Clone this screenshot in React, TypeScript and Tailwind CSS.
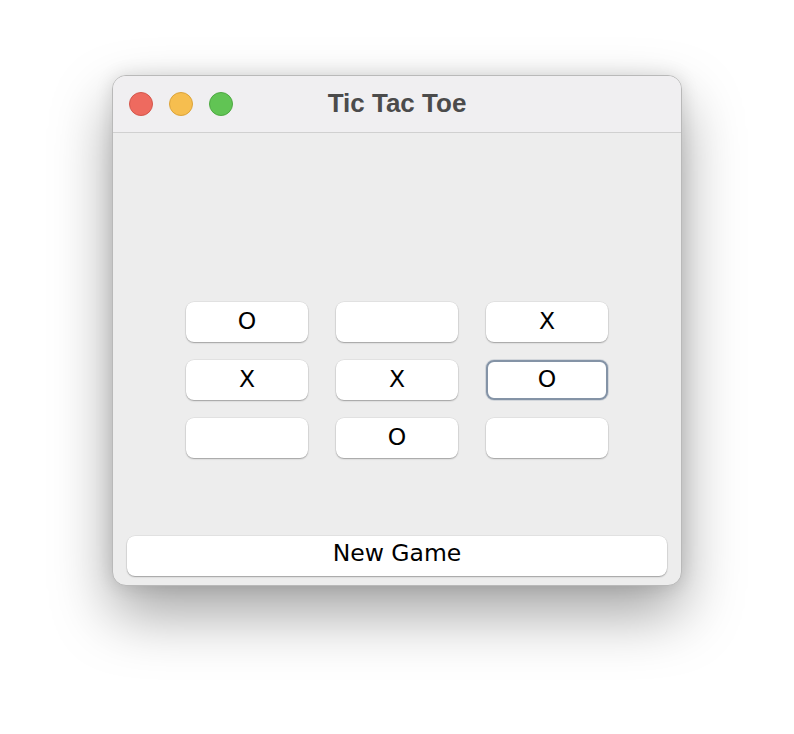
import React from "react";

const cells = ["O", "", "X", "X", "X", "O", "", "O", ""];

export default function App() {
  return (
    <div className="w-[794px] h-[734px] bg-white pt-[75px] pl-[112px]">
      <div className="w-[570px] h-[511px] rounded-[14px] bg-[#ededed] border border-[#b9b9b9] shadow-[0_28px_60px_rgba(0,0,0,0.36),0_0_18px_rgba(0,0,0,0.12)] flex flex-col overflow-hidden">
        <div className="h-[57px] shrink-0 bg-[#f0eff1] border-b border-[#d0d0d0] flex items-center relative">
          <div className="flex items-center gap-[16px] pl-[16px]">
            <div className="w-[24px] h-[24px] rounded-full bg-[#ee6a5f] border border-[#d4574c]" />
            <div className="w-[24px] h-[24px] rounded-full bg-[#f6be4f] border border-[#dca43a]" />
            <div className="w-[24px] h-[24px] rounded-full bg-[#61c454] border border-[#4ea942]" />
          </div>
          <div
            className="absolute left-0 right-0 top-0 h-full flex items-center justify-center text-[26px] font-bold text-[#4b4b4b] pb-[1px]"
            style={{ fontFamily: '"Liberation Sans", Arial, sans-serif' }}
          >
            Tic Tac Toe
          </div>
        </div>
        <div className="flex-1 flex flex-col" style={{ fontFamily: '"DejaVu Sans", "Lucida Grande", sans-serif' }}>
          <div className="pt-[169px] flex justify-center">
            <div className="grid grid-cols-[122px_122px_122px] gap-x-[28px] gap-y-[18px]">
              {cells.map((c, i) => (
                <div
                  key={i}
                  className={
                    "h-[40px] rounded-[8px] bg-white flex items-center justify-center text-[23.5px] text-black " +
                    (i === 5
                      ? "border-2 border-[#8493a6] shadow-[0_0_0_1px_rgba(132,147,166,0.25)]"
                      : "shadow-[0_1px_1.5px_rgba(0,0,0,0.3),0_0_0_0.5px_rgba(0,0,0,0.08)]")
                  }
                >
                  {c}
                </div>
              ))}
            </div>
          </div>
          <div className="mt-[78px] mx-[14px] h-[40px] rounded-[8px] bg-white flex items-center justify-center text-[23.5px] text-black pb-[5px] shadow-[0_1px_1.5px_rgba(0,0,0,0.3),0_0_0_0.5px_rgba(0,0,0,0.08)]">
            New Game
          </div>
        </div>
      </div>
    </div>
  );
}
